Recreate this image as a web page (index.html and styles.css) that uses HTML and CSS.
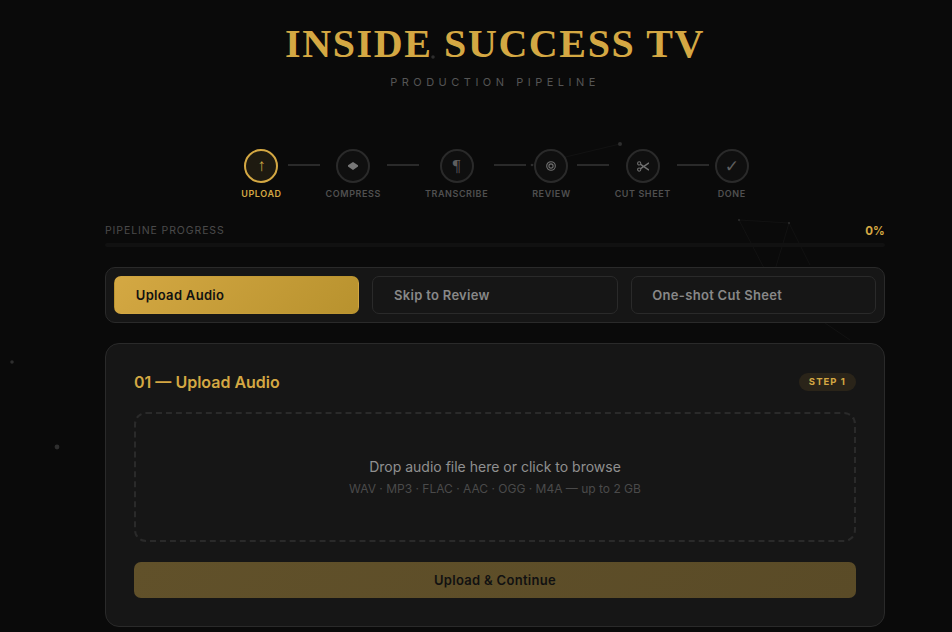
FILE: index.html
```html
<!DOCTYPE html>
<html lang="en">
<head>
<meta charset="utf-8">
<title>Inside Success TV</title>
<link rel="stylesheet" href="styles.css">
</head>
<body>
<svg class="particles" width="952" height="632" viewBox="0 0 952 632" aria-hidden="true">
  <g class="links">
    <line x1="532" y1="165" x2="620" y2="144"/>
    <line x1="739" y1="220" x2="789" y2="223"/>
    <line x1="739" y1="220" x2="765" y2="270"/>
    <line x1="789" y1="223" x2="775" y2="270"/>
    <line x1="789" y1="223" x2="810" y2="265"/>
    <line x1="825" y1="323" x2="850" y2="340"/>
  </g>
  <g class="dots">
    <circle cx="620" cy="144" r="2"/>
    <circle cx="12" cy="362" r="1.8"/>
    <circle cx="57" cy="447" r="2.4"/>
    <circle cx="433" cy="57" r="1.8"/>
    <circle cx="532" cy="165" r="1.3"/>
    <circle cx="739" cy="220" r="1"/>
    <circle cx="789" cy="223" r="1"/>
  </g>
</svg>
<main class="page">
  <header class="masthead">
    <h1 class="brand">INSIDE SUCCESS TV</h1>
    <p class="tagline">PRODUCTION PIPELINE</p>
  </header>

  <ol class="steps">
    <li class="step is-active"><span class="step-dot">↑</span><span class="step-label">UPLOAD</span></li>
    <li class="step-line"></li>
    <li class="step"><span class="step-dot"><svg class="icon-diamond" width="10" height="8" viewBox="0 0 10 8" aria-hidden="true"><path d="M5 0 L10 3.2 V4.4 L5 8 L0 4.4 V3.2 Z"/></svg></span><span class="step-label">COMPRESS</span></li>
    <li class="step-line"></li>
    <li class="step"><span class="step-dot">¶</span><span class="step-label">TRANSCRIBE</span></li>
    <li class="step-line"></li>
    <li class="step"><span class="step-dot"><svg class="icon-line" width="10" height="10" viewBox="0 0 10 10" aria-hidden="true"><circle cx="5" cy="5" r="4.3"/><circle cx="5" cy="5" r="2.1"/></svg></span><span class="step-label">REVIEW</span></li>
    <li class="step-line"></li>
    <li class="step"><span class="step-dot"><svg class="icon-line" width="12" height="11" viewBox="0 0 12 11" aria-hidden="true"><circle cx="2.2" cy="2.4" r="1.6"/><circle cx="2.2" cy="8.6" r="1.6"/><path class="blade" d="M3.6 3.4 L12 9.2 M3.6 7.6 L12 1.8"/></svg></span><span class="step-label">CUT SHEET</span></li>
    <li class="step-line"></li>
    <li class="step"><span class="step-dot">✓</span><span class="step-label">DONE</span></li>
  </ol>

  <section class="progress">
    <div class="progress-head"><span>PIPELINE PROGRESS</span><strong>0%</strong></div>
    <div class="progress-track"></div>
  </section>

  <nav class="tabs">
    <button class="tab is-active">Upload Audio</button>
    <button class="tab">Skip to Review</button>
    <button class="tab">One-shot Cut Sheet</button>
  </nav>

  <section class="card">
    <div class="card-head">
      <h2 class="card-title">01 — Upload Audio</h2>
      <span class="badge">STEP 1</span>
    </div>
    <div class="dropzone">
      <p class="drop-main">Drop audio file here or click to browse</p>
      <p class="drop-sub">WAV · MP3 · FLAC · AAC · OGG · M4A — up to 2 GB</p>
    </div>
    <button class="submit">Upload &amp; Continue</button>
  </section>
</main>
</body>
</html>
```

FILE: styles.css
```css
* { box-sizing: border-box; }
html, body { margin: 0; padding: 0; }
body {
  width: 952px;
  height: 632px;
  overflow: hidden;
  background: #0a0a0a;
  color: #ccc;
  font-family: Inter, "Liberation Sans", sans-serif;
  position: relative;
}
.particles { position: absolute; left: 0; top: 0; }
.links line { stroke: #121212; stroke-width: 1; }
.dots circle { fill: #2e2e2e; }

.page {
  position: relative;
  width: 780px;
  margin-left: 105px;
}
.masthead { text-align: center; padding-top: 22px; }
.brand {
  margin: 0;
  font-family: "Liberation Serif", serif;
  font-size: 40px;
  line-height: 44px;
  font-weight: 700;
  letter-spacing: 1.6px;
  color: #d4a843;
}
.tagline {
  margin: 8px 0 0;
  font-size: 11px;
  line-height: 16px;
  letter-spacing: 4.5px;
  color: #555;
}

.steps {
  list-style: none;
  margin: 59px 0 0;
  padding: 0;
  display: flex;
  justify-content: center;
  align-items: flex-start;
}
.step { display: flex; flex-direction: column; align-items: center; gap: 5px; }
.step-dot {
  width: 34px;
  height: 34px;
  border-radius: 50%;
  border: 2px solid #2a2a2a;
  display: flex;
  align-items: center;
  justify-content: center;
  font-family: "Liberation Serif", "DejaVu Sans", serif;
  font-size: 17px;
  color: #5e5e5e;
  background: #0f0f0f;
}
.icon-diamond { fill: #777; }
.icon-line { fill: none; stroke: #707070; stroke-width: 1.1; }
.icon-line .blade { stroke-width: 1.5; }
.step-label {
  font-size: 9px;
  line-height: 11px;
  font-weight: 600;
  letter-spacing: 0.58px;
  color: #505050;
}
.step.is-active .step-dot { border-color: #d4a843; color: #d4a843; background: #1e1a10; }
.step.is-active .step-label { color: #d4a843; }
.step-line {
  width: 32px;
  height: 2px;
  margin: 15px 6px 0;
  background: #2a2a2a;
}

.progress { margin-top: 25px; }
.progress-head {
  display: flex;
  justify-content: space-between;
  align-items: center;
  font-size: 10.5px;
  line-height: 14px;
  letter-spacing: 0.9px;
  color: #4a4a4a;
}
.progress-head strong { font-size: 11.5px; font-weight: 700; letter-spacing: 0.2px; color: #d4a843; }
.progress-track { height: 4px; margin-top: 5px; border-radius: 2px; background: #111; }

.tabs {
  display: flex;
  gap: 12.8px;
  margin-top: 20px;
  padding: 8px;
  height: 56px;
  background: #161616;
  border: 1px solid #2a2a2a;
  border-radius: 10px;
}
.tab {
  flex: 1;
  height: 38px;
  padding: 0 20.8px;
  text-align: left;
  font: 600 13px Inter, "Liberation Sans", sans-serif;
  letter-spacing: 0.3px;
  color: #888;
  background: transparent;
  border: 1px solid #2a2a2a;
  border-radius: 7px;
}
.tab.is-active {
  color: #111;
  border-color: transparent;
  background: linear-gradient(135deg, #d4a843, #b8922e);
}

.card {
  margin-top: 20px;
  height: 284px;
  padding: 28px;
  background: #161616;
  border: 1px solid #2a2a2a;
  border-radius: 14px;
}
.card-head { display: flex; justify-content: space-between; align-items: center; height: 20px; }
.card-title { margin: 0; font-size: 16px; line-height: 20px; font-weight: 600; color: #d4a843; }
.badge {
  padding: 0 10px;
  height: 18px;
  line-height: 18px;
  font-size: 9.5px;
  font-weight: 700;
  letter-spacing: 1.05px;
  color: #d4a843;
  background: #2a2419;
  border-radius: 9px;
}
.dropzone {
  height: 130px;
  margin-top: 20px;
  border: 2px dashed #2a2a2a;
  border-radius: 12px;
  display: flex;
  flex-direction: column;
  align-items: center;
  justify-content: center;
}
.drop-main { margin: 0; font-size: 14px; line-height: 20px; color: #909090; }
.drop-sub { margin: 4px 0 0; font-size: 12px; line-height: 16px; color: #4a4a4a; }
.submit {
  display: block;
  width: 100%;
  height: 36px;
  margin-top: 20px;
  font: 600 13px Inter, "Liberation Sans", sans-serif;
  letter-spacing: 0.3px;
  color: #111;
  background: linear-gradient(135deg, #61512a, #5a4b27);
  border: 0;
  border-radius: 7px;
}
```
